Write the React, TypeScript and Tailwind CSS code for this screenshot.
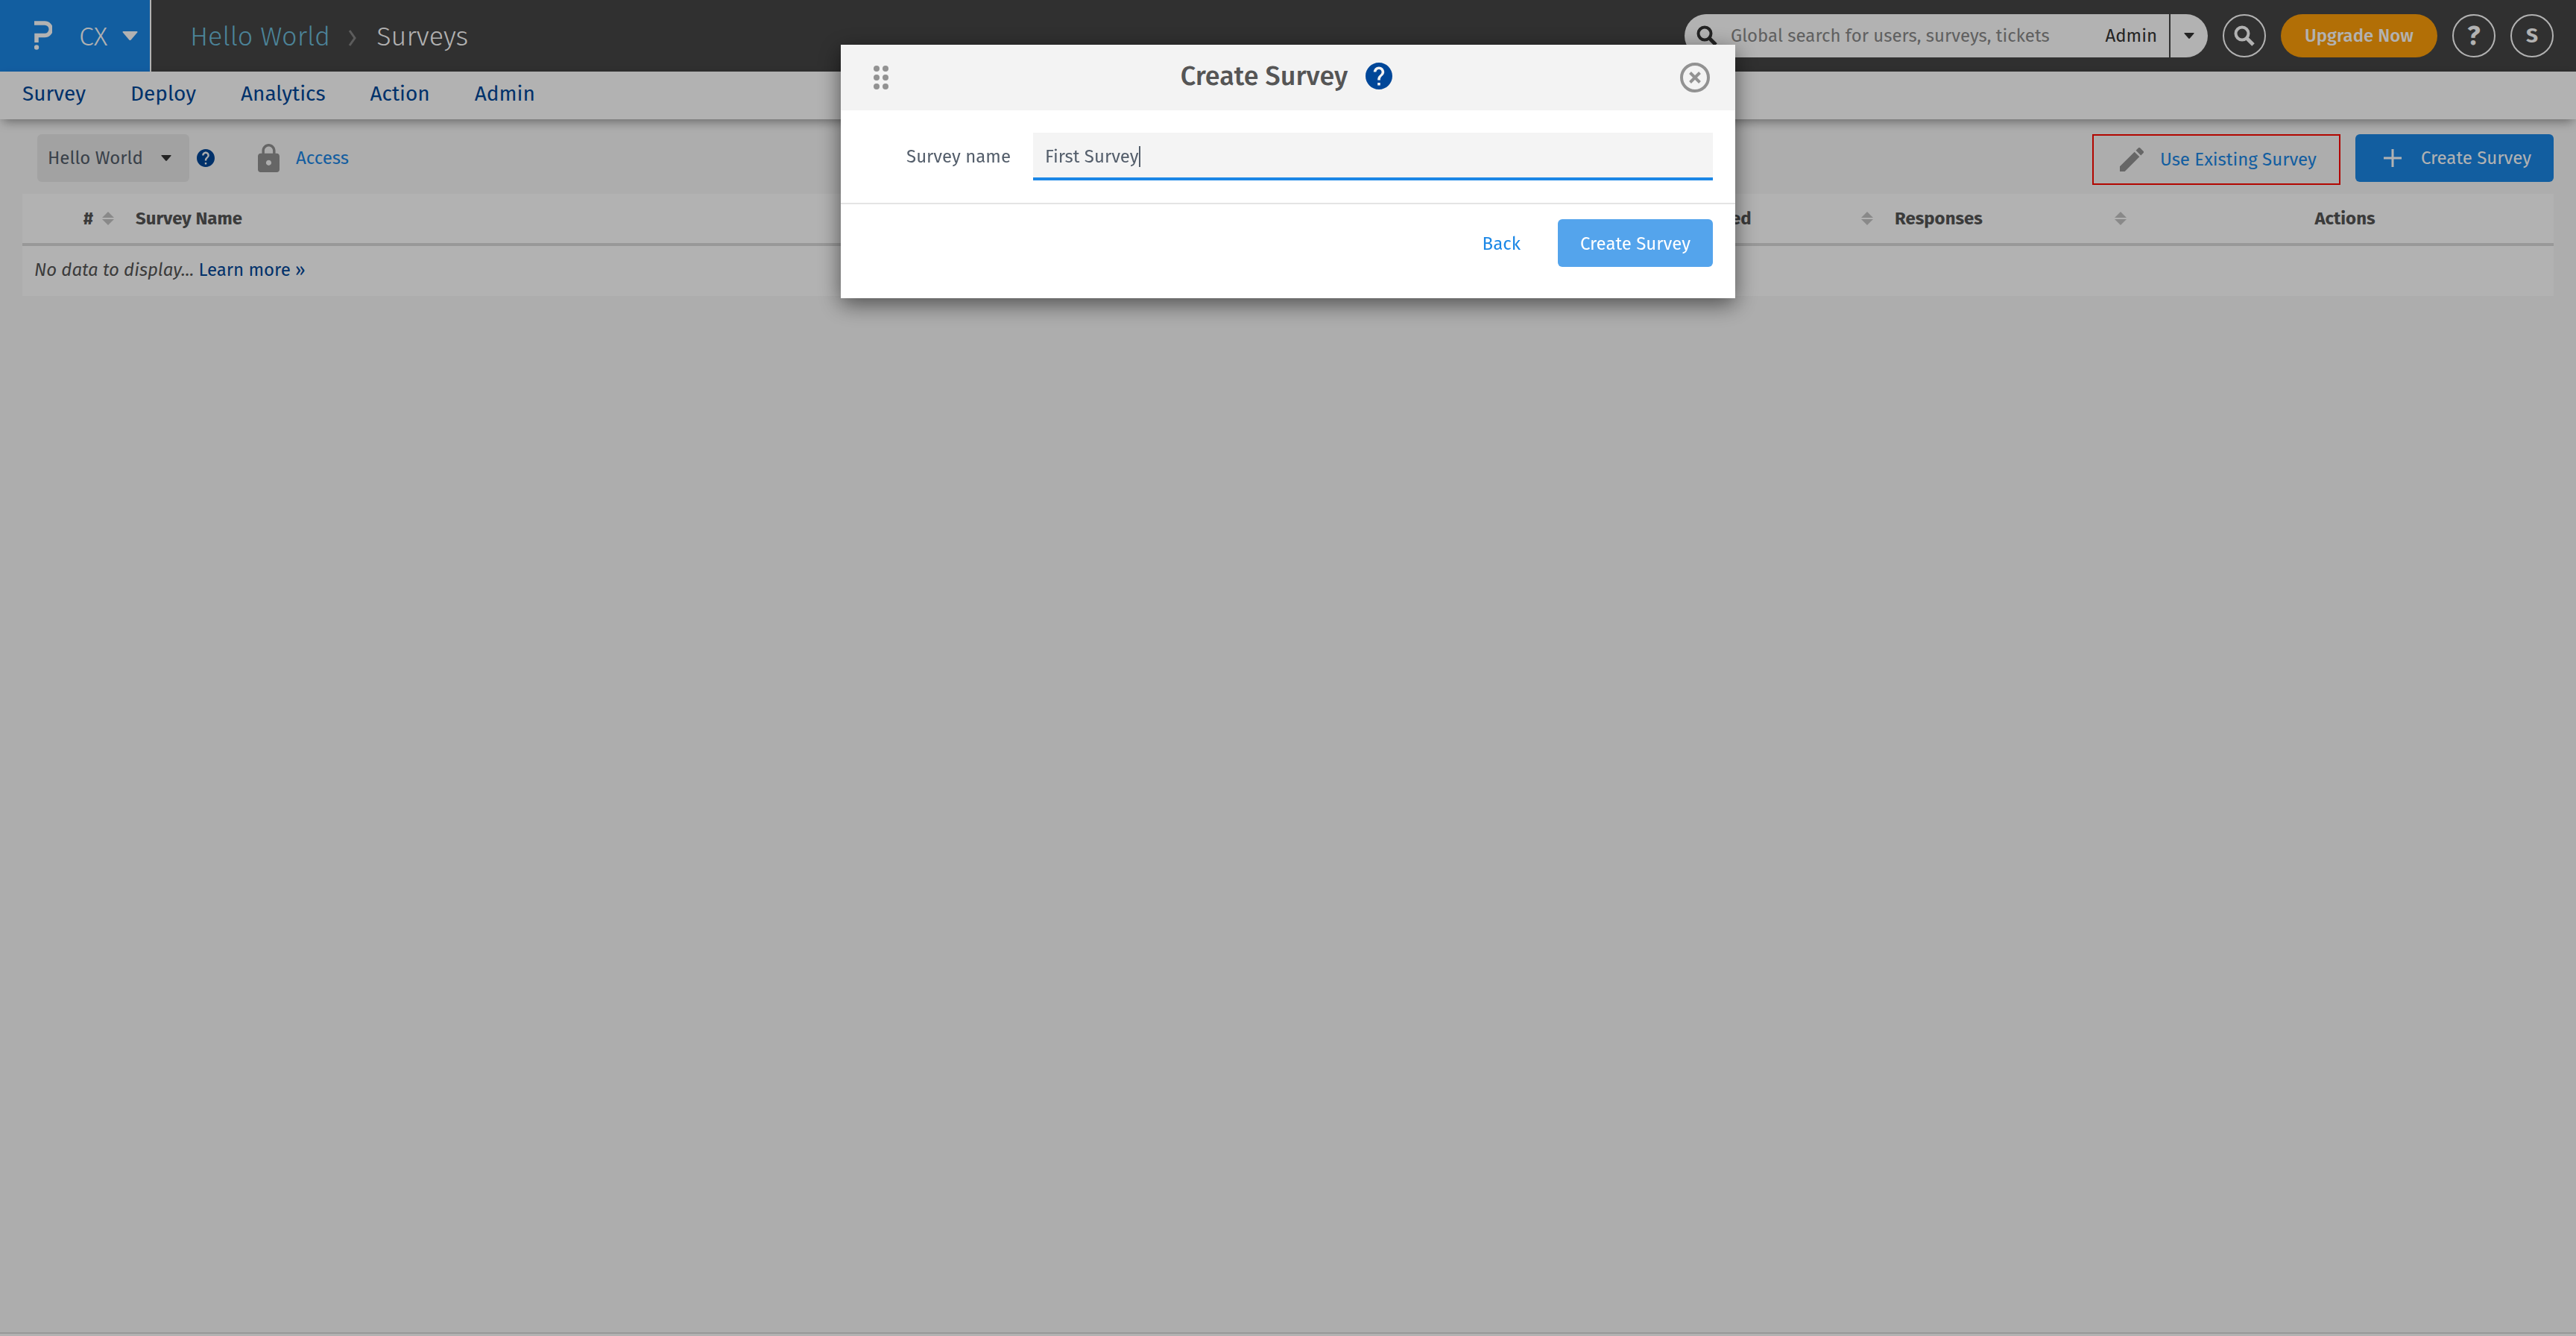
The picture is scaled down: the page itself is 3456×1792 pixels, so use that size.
const navLinks = ["Survey", "Deploy", "Analytics", "Action", "Admin"];

const Caret = ({ className }: { className: string }) => (
  <svg viewBox="0 0 14 8" className={className} fill="currentColor" aria-hidden="true">
    <path d="M1 0h12q1 .3.5 1L7.800 7.600q-.8.7-1.600 0L.5 1Q0 .3 1 0z" />
  </svg>
);

const HelpIcon = ({ className }: { className: string }) => (
  <svg viewBox="2 2 20 20" className={className} fill="currentColor" aria-hidden="true">
    <path d="M12 2C6.480 2 2 6.480 2 12s4.480 10 10 10 10-4.480 10-10S17.520 2 12 2zm1 17h-2v-2h2v2zm2.070-7.750l-.9.920C13.450 12.900 13 13.500 13 15h-2v-.5c0-1.100.450-2.100 1.170-2.830l1.240-1.260c.370-.360.590-.860.590-1.410 0-1.100-.9-2-2-2s-2 .9-2 2H8c0-2.210 1.790-4 4-4s4 1.790 4 4c0 .880-.360 1.680-.930 2.250z" />
  </svg>
);

const SearchIcon = ({ className }: { className: string }) => (
  <svg viewBox="0 0 28 28" className={className} fill="none" stroke="currentColor" strokeWidth="4" aria-hidden="true">
    <circle cx="11" cy="11" r="8.500" />
    <path d="M16.500 16.500L26 26" strokeWidth="5" />
  </svg>
);

const SortIcon = () => (
  <svg viewBox="0 0 16 18" className="h-[18px] w-4 text-[#c5c5c5]" fill="currentColor" aria-hidden="true">
    <path d="M8 0l8 8H0zM0 10h16l-8 8z" />
  </svg>
);

const Header = () => (
  <header className="flex h-24 items-center bg-[#454545] text-white">
    <button className="flex h-full w-[203px] items-center border-r-2 border-white bg-[#1b87e6] pl-[46px]" aria-label="Switch product">
      <svg viewBox="0 0 24 40" className="h-10 w-6" aria-hidden="true">
        <path d="M0 3h14a8.200 8.200 0 0 1 0 16.500H3V29" fill="none" stroke="currentColor" strokeWidth="5.500" />
        <circle cx="3" cy="35.500" r="3.200" fill="currentColor" />
      </svg>
      <span className="ml-9 pt-0.5 text-4xl font-light">CX</span>
      <Caret className="ml-5 h-3 w-[21px]" />
    </button>
    <nav className="ml-[52px] flex items-center pt-0.5 text-4xl font-light" aria-label="Breadcrumb">
      <a href="#" className="text-[#6dbddb]">
        Hello World
      </a>
      <svg viewBox="0 0 12 22" className="mt-1 mr-[26px] ml-6 h-[22px] w-3 text-[#858585]" fill="none" stroke="currentColor" strokeWidth="3" aria-hidden="true">
        <path d="M2 1l7 10-7 10" />
      </svg>
      <span>Surveys</span>
    </nav>
    <div className="ml-auto flex items-center gap-5 pr-[30px]">
      <div className="flex h-[58px] w-[702px] items-center rounded-full bg-white text-[#333]">
        <SearchIcon className="ml-4 h-7 w-7 shrink-0" />
        <input
          type="text"
          aria-label="Global search"
          placeholder="Global search for users, surveys, tickets"
          className="ml-[18px] min-w-0 flex-1 bg-transparent text-2xl outline-none placeholder:text-[#8a8a8a]"
        />
        <button className="px-4 text-2xl">Admin</button>
        <button className="flex h-full w-[52px] items-center border-l-2 border-[#454545] pl-[18px]" aria-label="Search scope">
          <Caret className="h-2 w-3.5" />
        </button>
      </div>
      <button className="flex h-[58px] w-[58px] items-center justify-center rounded-full border-2 border-white" aria-label="Search">
        <SearchIcon className="h-7 w-7" />
      </button>
      <button className="h-[58px] w-[210px] rounded-full bg-[#ffa00a] text-2xl font-medium">Upgrade Now</button>
      <button className="h-[58px] w-[58px] rounded-full border-2 border-white text-4xl font-bold" aria-label="Help">
        ?
      </button>
      <button className="h-[58px] w-[58px] rounded-full border-2 border-white text-[28px] font-bold">S</button>
    </div>
  </header>
);

const Toolbar = () => (
  <div className="flex items-start justify-between pl-5">
    <div className="flex h-16 items-center">
      <div className="relative">
        <select
          aria-label="Workspace"
          className="h-16 w-[204px] appearance-none rounded-md bg-[#e8e8e8] pl-[14px] text-2xl text-[#545e6b]"
        >
          <option>Hello World</option>
        </select>
        <Caret className="pointer-events-none absolute top-7 right-6 h-2 w-3.5 text-[#333]" />
      </div>
      <HelpIcon className="ml-2.5 h-6 w-6 text-[#004799]" />
      <a href="#" className="ml-[58px] flex items-center text-2xl text-[#1b87e6]">
        <svg viewBox="4 1 16 21" className="mr-[22px] h-[38px] w-[29px] text-[#929292]" fill="currentColor" aria-hidden="true">
          <path d="M18 8h-1V6c0-2.760-2.240-5-5-5S7 3.240 7 6v2H6c-1.100 0-2 .9-2 2v10c0 1.100.9 2 2 2h12c1.100 0 2-.9 2-2V10c0-1.100-.9-2-2-2zm-6 9c-1.100 0-2-.9-2-2s.9-2 2-2 2 .9 2 2-.9 2-2 2zm3.100-9H8.900V6c0-1.710 1.390-3.100 3.100-3.100 1.710 0 3.100 1.390 3.100 3.100v2z" />
        </svg>
        Access
      </a>
    </div>
    <div className="flex items-start gap-5">
      <button className="flex h-[68px] items-center border-2 border-[#ff0a00] pr-[30px] pl-[35px] text-2xl text-[#1b87e6]">
        <svg viewBox="3 3 18 18" className="mr-[22px] h-8 w-8 text-[#929292]" fill="currentColor" aria-hidden="true">
          <path d="M3 17.250V21h3.750L17.810 9.940l-3.750-3.750L3 17.250zM20.710 7.040a.996.996 0 0 0 0-1.410l-2.340-2.340a.996.996 0 0 0-1.410 0l-1.830 1.830 3.750 3.750 1.830-1.830z" />
        </svg>
        Use Existing Survey
      </button>
      <button className="flex h-16 items-center rounded-md bg-[#1b87e6] pr-[30px] pl-[38px] text-2xl text-white">
        <svg viewBox="0 0 24 24" className="mr-[26px] h-6 w-6" stroke="currentColor" strokeWidth="3" aria-hidden="true">
          <path d="M12 0v24M0 12h24" />
        </svg>
        Create Survey
      </button>
    </div>
  </div>
);

const SurveyTable = () => (
  <table className="mt-3 w-full table-fixed bg-white text-2xl text-[#555]">
    <thead>
      <tr className="h-[68px] border-b-4 border-[#dadada] text-left">
        <th className="w-[136px] pr-[13px]">
          <div className="flex items-center justify-end gap-3">
            # <SortIcon />
          </div>
        </th>
        <th className="px-4">Survey Name</th>
        <th className="w-[340px] pr-[13px] pl-4">
          <div className="flex items-center justify-between">
            Last Modified <SortIcon />
          </div>
        </th>
        <th className="w-[340px] pr-[13px] pl-4">
          <div className="flex items-center justify-between">
            Responses <SortIcon />
          </div>
        </th>
        <th className="w-[560px] text-center">Actions</th>
      </tr>
    </thead>
    <tbody>
      <tr className="h-[69px]">
        <td colSpan={5} className="pb-1 pl-4">
          <em>No data to display...</em>{" "}
          <a href="#" className="text-[#004799]">
            Learn more »
          </a>
        </td>
      </tr>
    </tbody>
  </table>
);

const CreateSurveyDialog = () => (
  <div className="fixed inset-0 flex items-start justify-center bg-black/30 pt-[60px]">
    <div role="dialog" aria-labelledby="dialog-title" className="w-full max-w-[1200px] bg-white shadow-[0_8px_28px_rgba(0,0,0,0.55)]">
      <div className="flex h-[88px] items-center justify-between bg-[#f3f3f3] pr-[34px] pl-11">
        <svg viewBox="0 0 20 32" className="mr-1.5 h-8 w-5 text-[#929292]" fill="currentColor" aria-hidden="true">
          {[4, 16, 28].map((y) => (
            <g key={y}>
              <circle cx="4" cy={y} r="4" />
              <circle cx="16" cy={y} r="4" />
            </g>
          ))}
        </svg>
        <div className="flex items-center gap-6 pb-1">
          <h2 id="dialog-title" className="text-4xl font-medium text-[#555]">
            Create Survey
          </h2>
          <HelpIcon className="h-9 w-9 text-[#004799]" />
        </div>
        <button aria-label="Close" className="text-[#929292]">
          <svg viewBox="0 0 40 40" className="h-10 w-10" fill="none" stroke="currentColor" strokeWidth="4" aria-hidden="true">
            <circle cx="20" cy="20" r="18" />
            <path d="M13.500 13.500l13 13M26.500 13.500l-13 13" />
          </svg>
        </button>
      </div>
      <div className="flex items-center border-b-2 border-[#e4e4e4] py-[30px] pr-[30px] text-2xl text-[#545e6b]">
        <label htmlFor="survey-name" className="w-[258px] pr-[30px] text-right">
          Survey name
        </label>
        <div className="relative flex-1">
          <input
            id="survey-name"
            type="text"
            defaultValue="First Survey"
            className="h-16 w-full border-b-4 border-[#1b87e6] bg-[#f4f4f4] px-4 pt-1 caret-transparent outline-none"
          />
          <span className="pointer-events-none absolute top-[18px] left-[142px] h-7 w-0.5 bg-[#545e6b]" />
        </div>
      </div>
      <div className="flex items-center justify-end gap-5 px-[30px] pt-5 pb-[42px] text-2xl">
        <button className="h-16 px-[30px] pt-0.5 text-[#1b87e6]">Back</button>
        <button className="h-16 w-[208px] rounded-md bg-[#54a4ec] pt-0.5 text-white">Create Survey</button>
      </div>
    </div>
  </div>
);

const App = () => (
  <div className="flex min-h-screen flex-col bg-[#f8f8f8] font-['Fira_Sans',Roboto,sans-serif]">
    <Header />
    <nav className="flex h-16 gap-[60px] bg-white px-[30px] pt-[9px] text-[28px] text-[#004799] shadow-[0_6px_14px_-4px_rgba(0,0,0,0.45)]">
      {navLinks.map((label) => (
        <a key={label} href="#">
          {label}
        </a>
      ))}
    </nav>
    <main className="flex-1 px-[30px] pt-5">
      <Toolbar />
      <SurveyTable />
    </main>
    <footer className="h-[5px] border-t-2 border-[#dadada] bg-white" />
    <CreateSurveyDialog />
  </div>
);

export default App;
